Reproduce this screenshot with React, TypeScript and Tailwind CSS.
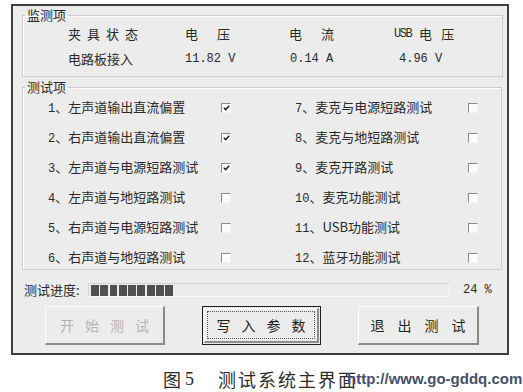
import React from 'react';

type TestItem = { no: string; label: string; checked: boolean };

const leftItems: TestItem[] = [
    { no: '1', label: '左声道输出直流偏置', checked: true },
    { no: '2', label: '右声道输出直流偏置', checked: true },
    { no: '3', label: '左声道与电源短路测试', checked: true },
    { no: '4', label: '左声道与地短路测试', checked: false },
    { no: '5', label: '右声道与电源短路测试', checked: false },
    { no: '6', label: '右声道与地短路测试', checked: false },
];

const rightItems: TestItem[] = [
    { no: '7', label: '麦克与电源短路测试', checked: false },
    { no: '8', label: '麦克与地短路测试', checked: false },
    { no: '9', label: '麦克开路测试', checked: false },
    { no: '10', label: '麦克功能测试', checked: false },
    { no: '11', label: 'USB功能测试', checked: false },
    { no: '12', label: '蓝牙功能测试', checked: false },
];

const cjk = "font-['SimSun','Noto_Sans_CJK_SC',sans-serif]";
const mono = "font-['Liberation_Mono','Noto_Sans_CJK_SC',monospace]";

const CheckBox: React.FC<{ checked: boolean }> = ({ checked }) => (
    <span className="flex w-[10px] h-[10px] items-center justify-center border-t border-l border-t-[#8a8a8a] border-l-[#8a8a8a] border-b border-r border-b-[#f4f4f4] border-r-[#f4f4f4] bg-[#fbfbfb]">
        {checked && (
            <svg width="7" height="6" viewBox="0 0 7 6">
                <path d="M0.8 2.6 L2.6 4.6 L6.2 0.8" stroke="#1a1a1a" strokeWidth="1.4" fill="none" />
            </svg>
        )}
    </span>
);

const ItemRow: React.FC<{ item: TestItem }> = ({ item }) => (
    <div className="flex items-center h-[22px]">
        <span className="w-[173px] whitespace-nowrap text-[13px] leading-[16px] text-[#2a2a2a]">
            <span className={mono + ' text-[12px]'}>{item.no}</span>
            <span>、</span>
            {item.label}
        </span>
        <CheckBox checked={item.checked} />
    </div>
);

const Chars: React.FC<{ text: string; gap: string }> = ({ text, gap }) => (
    <span className={`flex whitespace-nowrap ${gap}`}>
        {text.split('').map((c, i) => (
            <span key={i}>{c}</span>
        ))}
    </span>
);

const WinButton: React.FC<{ label: string; width: string; gap: string; variant?: 'disabled' | 'default' | 'normal' }> = ({
    label,
    width,
    gap,
    variant = 'normal',
}) => {
    if (variant === 'default') {
        return (
            <div className={`${width} h-[39px] border border-[#1e1e1e] p-[1px] bg-[#ececec]`}>
                <div className="h-full border-t border-l border-t-white border-l-white border-b-2 border-r-2 border-b-[#8c8c8c] border-r-[#8c8c8c] p-[2px]">
                    <div className="h-full border border-dotted border-[#555] flex items-center justify-center text-[14px] text-[#1e1e1e]">
                        <Chars text={label} gap={gap} />
                    </div>
                </div>
            </div>
        );
    }
    return (
        <div
            className={`${width} h-[39px] border-t border-l border-t-white border-l-white border-b-2 border-r-2 border-b-[#8a8a8a] border-r-[#8a8a8a] bg-[#ececec] flex items-center justify-center text-[14px] ${
                variant === 'disabled' ? 'text-[#b4b4b4]' : 'text-[#1e1e1e]'
            }`}
        >
            <Chars text={label} gap={gap} />
        </div>
    );
};

export default function App() {
    const blocks = Array.from({ length: 9 });

    return (
        <div className={`w-[523px] h-[392px] bg-white overflow-hidden ${cjk}`}>
            <div className="ml-[11px] mt-[4px] w-[498px] h-[351px] border-2 border-[#3e3e3e] bg-[#ececec] flex flex-col">
                {/* 监测项 */}
                <fieldset className="ml-[9px] mt-[1px] w-[481px] h-[70px] border border-[#cdcdcd] shadow-[inset_1px_1px_0_#fff]">
                    <legend className="ml-[2px] px-[2px] text-[13px] leading-[16px] text-[#2a2a2a]">监测项</legend>
                    <div className="flex flex-col gap-[9px] pt-[3px] pl-[45px] text-[13px] leading-[16px] text-[#2a2a2a]">
                        <div className="flex h-[16px] items-center">
                            <span className="w-[117px] tracking-[6px]">夹具状态</span>
                            <span className="w-[104px] flex">
                                <span>电</span>
                                <span className="ml-[19px]">压</span>
                            </span>
                            <span className="w-[105px] flex">
                                <span>电</span>
                                <span className="ml-[19px]">流</span>
                            </span>
                            <span className="flex items-center">
                                <span className={mono + ' text-[12px] tracking-[-1.5px]'}>USB</span>
                                <span className="ml-[8px]">电</span>
                                <span className="ml-[9px]">压</span>
                            </span>
                        </div>
                        <div className={`flex h-[16px] items-center`}>
                            <span className="w-[117px]">电路板接入</span>
                            <span className={`w-[104px] ${mono} text-[12px]`}>11.82 V</span>
                            <span className={`w-[105px] ${mono} text-[12px] pl-[1px]`}>0.14 A</span>
                            <span className={`${mono} text-[12px] pl-[5px]`}>4.96 V</span>
                        </div>
                    </div>
                </fieldset>

                {/* 测试项 */}
                <fieldset className="ml-[9px] mt-[2px] w-[480px] h-[191px] border border-[#cdcdcd] shadow-[inset_1px_1px_0_#fff]">
                    <legend className="ml-[2px] px-[2px] text-[13px] leading-[16px] text-[#2a2a2a]">测试项</legend>
                    <div className="grid grid-cols-[247px_1fr] pl-[25px] pt-[2px]">
                        <div className="flex flex-col gap-[8px]">
                            {leftItems.map((item) => (
                                <ItemRow key={item.no} item={item} />
                            ))}
                        </div>
                        <div className="flex flex-col gap-[8px]">
                            {rightItems.map((item) => (
                                <ItemRow key={item.no} item={item} />
                            ))}
                        </div>
                    </div>
                </fieldset>

                {/* 测试进度 */}
                <div className="flex items-center h-[16px] mt-[12px] pl-[11px] text-[13px] leading-[16px] text-[#2a2a2a]">
                    <span className="w-[64px] whitespace-nowrap">测试进度:</span>
                    <div className="w-[362px] h-[14px] border border-[#d2d2d2] border-b-[#f8f8f8] border-r-[#f8f8f8] flex items-center gap-[1.5px] pl-[2px]">
                        {blocks.map((_, i) => (
                            <span key={i} className="w-[7.8px] h-[11px] bg-[#505050]" />
                        ))}
                    </div>
                    <span className={`ml-[13px] ${mono} text-[12px]`}>24 %</span>
                </div>

                {/* buttons */}
                <div className="flex mt-[8px] pl-[32px] gap-[37px]">
                    <WinButton label="开始测试" width="w-[120px]" gap="gap-[11px]" variant="disabled" />
                    <WinButton label="写入参数" width="w-[119px]" gap="gap-[11px]" variant="default" />
                    <WinButton label="退出测试" width="w-[121px]" gap="gap-[13px]" />
                </div>
            </div>

            {/* caption */}
            <div className="relative mt-[14px] h-[20px] pl-[163px] flex items-center text-[18px] leading-[20px] text-[#2b2b2b]">
                <span>图</span>
                <span className="ml-[4px] font-['Liberation_Serif',serif]">5</span>
                <span className="ml-[24px] tracking-[2px]">测试系统主界面</span>
                <span className="absolute left-[347px] top-[2px] whitespace-nowrap font-['Liberation_Sans',sans-serif] font-bold text-[15px] leading-[16px] text-[#46506a]">
                    http://www.go-gddq.com
                </span>
            </div>
        </div>
    );
}
